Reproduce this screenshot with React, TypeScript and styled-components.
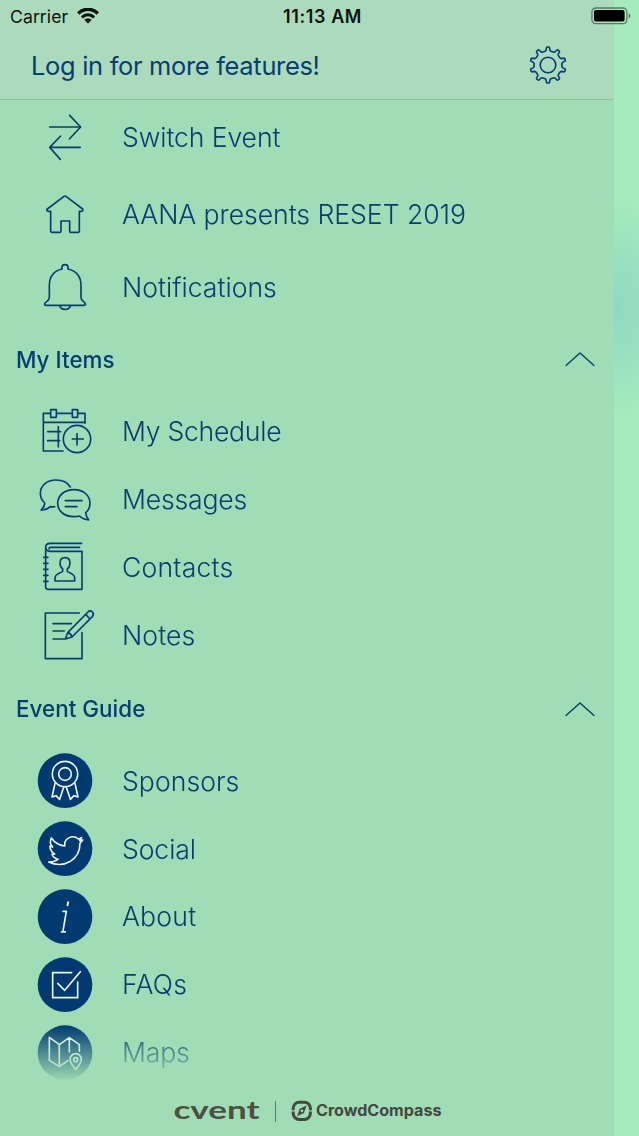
import React from "react";
import styled, { createGlobalStyle } from "styled-components";

const NAVY = "#063d72";
const PANEL = "#a0dcb5";

const GlobalStyle = createGlobalStyle`
  *, *::before, *::after { box-sizing: border-box; }
  body { margin: 0; background: #a4ecbc; }
`;

const Screen = styled.div`
  position: relative;
  width: 639px;
  height: 1136px;
  overflow: hidden;
  display: grid;
  grid-template-columns: 614px 1fr;
  font-family: Inter, "Liberation Sans", sans-serif;
  color: ${NAVY};
`;

const Drawer = styled.div`
  display: flex;
  flex-direction: column;
  background: ${PANEL};
  min-height: 0;
`;

const Backdrop = styled.div`
  background:
    radial-gradient(ellipse 75px 110px at 0 308px, #8fd8c1 0%, rgba(143, 216, 193, 0.75) 30%, rgba(164, 236, 188, 0) 100%),
    #a4ecbc;
`;

const StatusBar = styled.div`
  position: absolute;
  inset: 0 0 auto 0;
  height: 32px;
  display: grid;
  grid-template-columns: 1fr auto 1fr;
  align-items: center;
  padding: 0 8px 0 10px;
  color: #0a120d;
`;

const Carrier = styled.div`
  display: flex;
  align-items: center;
  gap: 9px;
  font-size: 17.6px;
  letter-spacing: 0.08px;
`;

const Clock = styled.div`
  font-size: 18px;
  font-weight: 600;
  letter-spacing: 0.6px;
  padding-left: 4px;
`;

const BatterySlot = styled.div`
  justify-self: end;
  display: flex;
`;

const Header = styled.header`
  flex: none;
  height: 100px;
  padding: 31px 46px 1px 31px;
  display: flex;
  justify-content: space-between;
  align-items: center;
  background: #abdabc;
  border-bottom: 1px solid #90bfa0;
`;

const LoginText = styled.div`
  padding-top: 2px;
  font-size: 25.4px;
  letter-spacing: -0.28px;
`;

const Menu = styled.nav`
  flex: none;
  height: 987px;
  mask-image: linear-gradient(#000 925px, transparent 982px);
`;

const Row = styled.div<{ $height?: number }>`
  height: ${(p) => p.$height ?? 68}px;
  padding-left: 33px;
  display: flex;
  align-items: center;
  gap: 25px;
`;

const Label = styled.span<{ $tracking?: number; $drop?: number }>`
  padding-top: ${(p) => p.$drop ?? 0}px;
  padding-bottom: 1px;
  font-size: 26.6px;
  font-weight: 300;
  line-height: 33px;
  white-space: nowrap;
  letter-spacing: ${(p) => p.$tracking ?? -0.2}px;
`;

const SectionHeader = styled.div<{ $height: number }>`
  height: ${(p) => p.$height}px;
  padding: 0 18px 0 16px;
  display: flex;
  align-items: center;
  justify-content: space-between;
`;

const SectionTitle = styled.h2`
  margin: 0;
  font-size: 22.4px;
  font-weight: 500;
  letter-spacing: 0.03px;
`;

const Footer = styled.footer`
  flex: 1;
  display: flex;
  align-items: center;
  padding-left: 173px;
`;

const Divider = styled.span`
  width: 1px;
  height: 21px;
  margin: 0 15px;
  background: #5f7a66;
`;

const LineArt = styled.svg`
  display: block;
  flex: none;
  fill: none;
  stroke: ${NAVY};
  stroke-width: 4.9;
  stroke-linecap: round;
  stroke-linejoin: round;
`;

const BadgeArt = styled(LineArt)`
  stroke: #eef6f5;
`;

const Icon = ({ top, children }: { top: number; children: React.ReactNode }) => (
  <LineArt width="64" height="64" viewBox={`39 ${top} 192 192`}>
    {children}
  </LineArt>
);

const Badge = ({ top, children }: { top: number; children: React.ReactNode }) => (
  <BadgeArt width="64" height="64" viewBox={`39 ${top} 192 192`}>
    <circle cx="135" cy={top + 95} r="82" fill="#003a70" stroke="none" />
    {children}
  </BadgeArt>
);

const gearPath = () => {
  const teeth = 10;
  const profile: [number, number][] = [
    [-11.5, 14],
    [-7, 15.1],
    [-5.2, 17.4],
    [-3.2, 18],
    [3.2, 18],
    [5.2, 17.4],
    [7, 15.1],
    [11.5, 14],
  ];
  const points: string[] = [];
  for (let i = 0; i < teeth; i++) {
    profile.forEach(([deg, r]) => {
      const a = ((i * 36 + deg - 90) * Math.PI) / 180;
      points.push(`${(20 + r * Math.cos(a)).toFixed(2)} ${(20 + r * Math.sin(a)).toFixed(2)}`);
    });
  }
  return `M${points.join("L")}Z`;
};

const Gear = () => (
  <LineArt width="40" height="40" viewBox="0 0 40 40">
    <g strokeWidth="1.6">
      <path d={gearPath()} />
      <circle cx="20" cy="20" r="7.8" />
    </g>
  </LineArt>
);

const Chevron = () => (
  <LineArt width="32" height="18" viewBox="0 0 32 18">
    <path strokeWidth="1.4" d="M2 15.5 16 3 30 15.5" />
  </LineArt>
);

const Wifi = () => (
  <svg width="22" height="16" viewBox="0 0 22 16" fill="none" stroke="#0a120d">
    <path strokeWidth="3.4" d="M1.2 5.5C6.8-.1 15.2-.1 20.8 5.5" />
    <path strokeWidth="3" d="M4.9 9.3c3.6-3.4 8.6-3.4 12.2 0" />
    <path fill="#0a120d" stroke="none" d="M11 15.4 7.4 11.9c2-1.8 5.2-1.8 7.2 0Z" />
  </svg>
);

const Battery = () => (
  <svg width="40" height="18" viewBox="0 0 40 18">
    <rect x=".9" y="1" width="35" height="15.6" rx="4" fill="none" stroke="#587b65" strokeWidth="1.3" />
    <rect x="3" y="3.1" width="30.6" height="11.4" rx="2" fill="#000" />
    <path d="M37.6 6.2q1.9.8 1.9 2.6t-1.9 2.6Z" fill="#587b65" />
  </svg>
);

const SwitchIcon = () => (
  <Icon top={18}>
    <path d="M89 81H181M149 46 182 81 148 117M181 142H89M122 108 89 142 121 178" />
  </Icon>
);

const HomeIcon = () => (
  <Icon top={249}>
    <path d="M132 289q3-2 6 0L188 327q2 3 0 5-1 2-4 2h-6v60q0 3-3 3h-24q-2 0-2-3v-31h-26v31q0 3-3 3H96q-4 0-4-3v-60h-7q-3 0-4-2-2-3 1-5Z" />
  </Icon>
);

const BellIcon = () => (
  <Icon top={465}>
    <path d="M126 507v-5q0-8 9-8t9 8v5q39 9 39 50v35q0 5 4 9l8 8q4 7-3 7H79q-8 0-4-7l9-8q4-4 4-9v-35q0-41 38-50ZM119 617q3 11 16 11t17-11" />
  </Icon>
);

const ScheduleIcon = () => (
  <Icon top={15}>
    <path d="M91 55H70V168H129M110 55h46M174 55h21v30M70 82H195M92 44h17v23H92ZM157 44h16v23h-16ZM83 110h39M83 137h36M115 95v61M157 132h33M171 116v34" />
    <circle cx="171" cy="132" r="41" />
  </Icon>
);

const MessagesIcon = () => (
  <Icon top={219}>
    <path d="M151 276C143 262 127 255 108 255c-28 0-47 17-47 40 0 12 5 22 13 29 1 9-4 15-11 21 11 1 21-3 28-10q7 1 13 0" />
    <path d="M162 284c28 0 48 17 48 41 0 11-5 22-13 28 1 9 3 15 9 22-11-1-20-5-27-12q-8 2-17 2c-28 0-49-16-49-40s21-41 49-41ZM136 317h50M136 335h35" />
  </Icon>
);

const ContactsIcon = () => (
  <Icon top={18}>
    <path d="M185 40H91q-14 0-14 12v119q0 7 9 7H186V64H91q-13 0-13-10M179 52H92q-5 0-5 5M71 82h13M71 100h13M71 118h13M71 136h13M71 154h13" />
    <path d="M135 83c10 0 15 7 15 17 0 8-3 13-8 17v7c3 5 22 6 22 20v9h-59v-9c0-14 20-15 23-20v-7c-5-4-8-9-8-17 0-10 5-17 15-17Z" />
  </Icon>
);

const NotesIcon = () => (
  <Icon top={222}>
    <path d="M178 249H76V386H186V308M99 281h55M99 303h34M99 327h37L143 308 204 246q6-7 13 0 6 6 0 14L156 321 136 327M197 253l13 14M143 308q9 2 13 13" />
  </Icon>
);

const SponsorsIcon = () => (
  <Badge top={27}>
    <circle cx="135" cy="102" r="38" />
    <circle cx="135" cy="102" r="19" />
    <path d="M105 130 96 171 108 167 119 178 131 142M165 130 174 171 162 167 151 178 139 142" />
  </Badge>
);

const SocialIcon = () => (
  <Badge top={231}>
    <path d="M134 318C116 316 104 308 94 294c-5 10-3 20 4 27l-8-3c0 11 5 19 14 24l-8 1c3 8 9 13 18 15-8 6-17 8-28 8 45 21 94-6 94-56l8-10-9 2 6-9-10 4c-16-14-43-4-41 21Z" />
  </Badge>
);

const AboutIcon = () => (
  <Badge top={15}>
    <path d="M144.5 67 142.5 76" strokeWidth="6" />
    <path d="M129 94H139L129 153Q129 157 136 155M124 156H135" />
  </Badge>
);

const FaqIcon = () => (
  <Badge top={219}>
    <path strokeLinejoin="miter" d="M155 278H98V353H173V306M113 310 134 331 181 275" />
  </Badge>
);

const MapsIcon = () => (
  <Badge top={33}>
    <path d="M144 152 118 170 88 151V82L118 104 148 83 178 104V124M118 104V168M148 83V126" />
    <path d="M167 179Q150 159 150 148a17 17 0 0 1 34 0Q184 159 167 179Z" />
    <circle cx="167" cy="149" r="6" />
  </Badge>
);

const CventLogo = () => (
  <svg width="87" height="40" viewBox="0 0 87 40" overflow="visible">
    <text
      x="0.5"
      y="27.2"
      fontFamily="Lato, sans-serif"
      fontWeight="700"
      fontSize="24.5"
      fill="#4c4f42"
      textLength="86"
      lengthAdjust="spacingAndGlyphs"
    >
      cvent
    </text>
  </svg>
);

const CrowdCompassLogo = () => (
  <svg width="151" height="24" viewBox="0 0 151 24">
    <rect x="2.2" y="2.2" width="17.2" height="17.2" rx="6" fill="none" stroke="#43483f" strokeWidth="3" />
    <path d="M0 10.8h5M16.6 10.8h5" stroke={PANEL} strokeWidth="1.2" />
    <path d="M15.6 5.4 12.9 13.1 6.1 16.2 8.7 8.8Z" fill="#43483f" />
    <circle cx="10.9" cy="10.8" r="1.4" fill={PANEL} />
    <text
      x="25"
      y="16.4"
      fontFamily="Inter, sans-serif"
      fontWeight="700"
      fontSize="15.6"
      fill="#43483f"
      textLength="125.5"
      lengthAdjust="spacingAndGlyphs"
    >
      CrowdCompass
    </text>
  </svg>
);

type Item = {
  label: string;
  icon: React.ReactNode;
  height?: number;
  tracking?: number;
  drop?: number;
};

const topItems: Item[] = [
  { label: "Switch Event", icon: <SwitchIcon />, height: 76, tracking: -0.1 },
  { label: "AANA presents RESET 2019", icon: <HomeIcon />, height: 78, tracking: -0.04 },
  { label: "Notifications", icon: <BellIcon />, height: 66, tracking: 0.03, drop: 2 },
];

const myItems: Item[] = [
  { label: "My Schedule", icon: <ScheduleIcon />, tracking: -0.28 },
  { label: "Messages", icon: <MessagesIcon /> },
  { label: "Contacts", icon: <ContactsIcon />, tracking: 0.2 },
  { label: "Notes", icon: <NotesIcon />, tracking: 0.1 },
];

const guideItems: Item[] = [
  { label: "Sponsors", icon: <SponsorsIcon />, tracking: 0.05, drop: 1 },
  { label: "Social", icon: <SocialIcon />, tracking: -0.1, drop: 1 },
  { label: "About", icon: <AboutIcon />, tracking: 0.2 },
  { label: "FAQs", icon: <FaqIcon />, tracking: 0.2 },
  { label: "Maps", icon: <MapsIcon /> },
];

const Rows = ({ items }: { items: Item[] }) => (
  <>
    {items.map((item) => (
      <Row key={item.label} $height={item.height}>
        {item.icon}
        <Label $tracking={item.tracking} $drop={item.drop}>
          {item.label}
        </Label>
      </Row>
    ))}
  </>
);

export default function App() {
  return (
    <>
      <GlobalStyle />
      <Screen>
        <Drawer>
          <Header>
            <LoginText>Log in for more features!</LoginText>
            <Gear />
          </Header>
          <Menu>
            <Rows items={topItems} />
            <SectionHeader $height={78}>
              <SectionTitle>My Items</SectionTitle>
              <Chevron />
            </SectionHeader>
            <Rows items={myItems} />
            <SectionHeader $height={77}>
              <SectionTitle>Event Guide</SectionTitle>
              <Chevron />
            </SectionHeader>
            <Rows items={guideItems} />
          </Menu>
          <Footer>
            <CventLogo />
            <Divider />
            <CrowdCompassLogo />
          </Footer>
        </Drawer>
        <Backdrop />
        <StatusBar>
          <Carrier>
            Carrier
            <Wifi />
          </Carrier>
          <Clock>11:13 AM</Clock>
          <BatterySlot>
            <Battery />
          </BatterySlot>
        </StatusBar>
      </Screen>
    </>
  );
}
